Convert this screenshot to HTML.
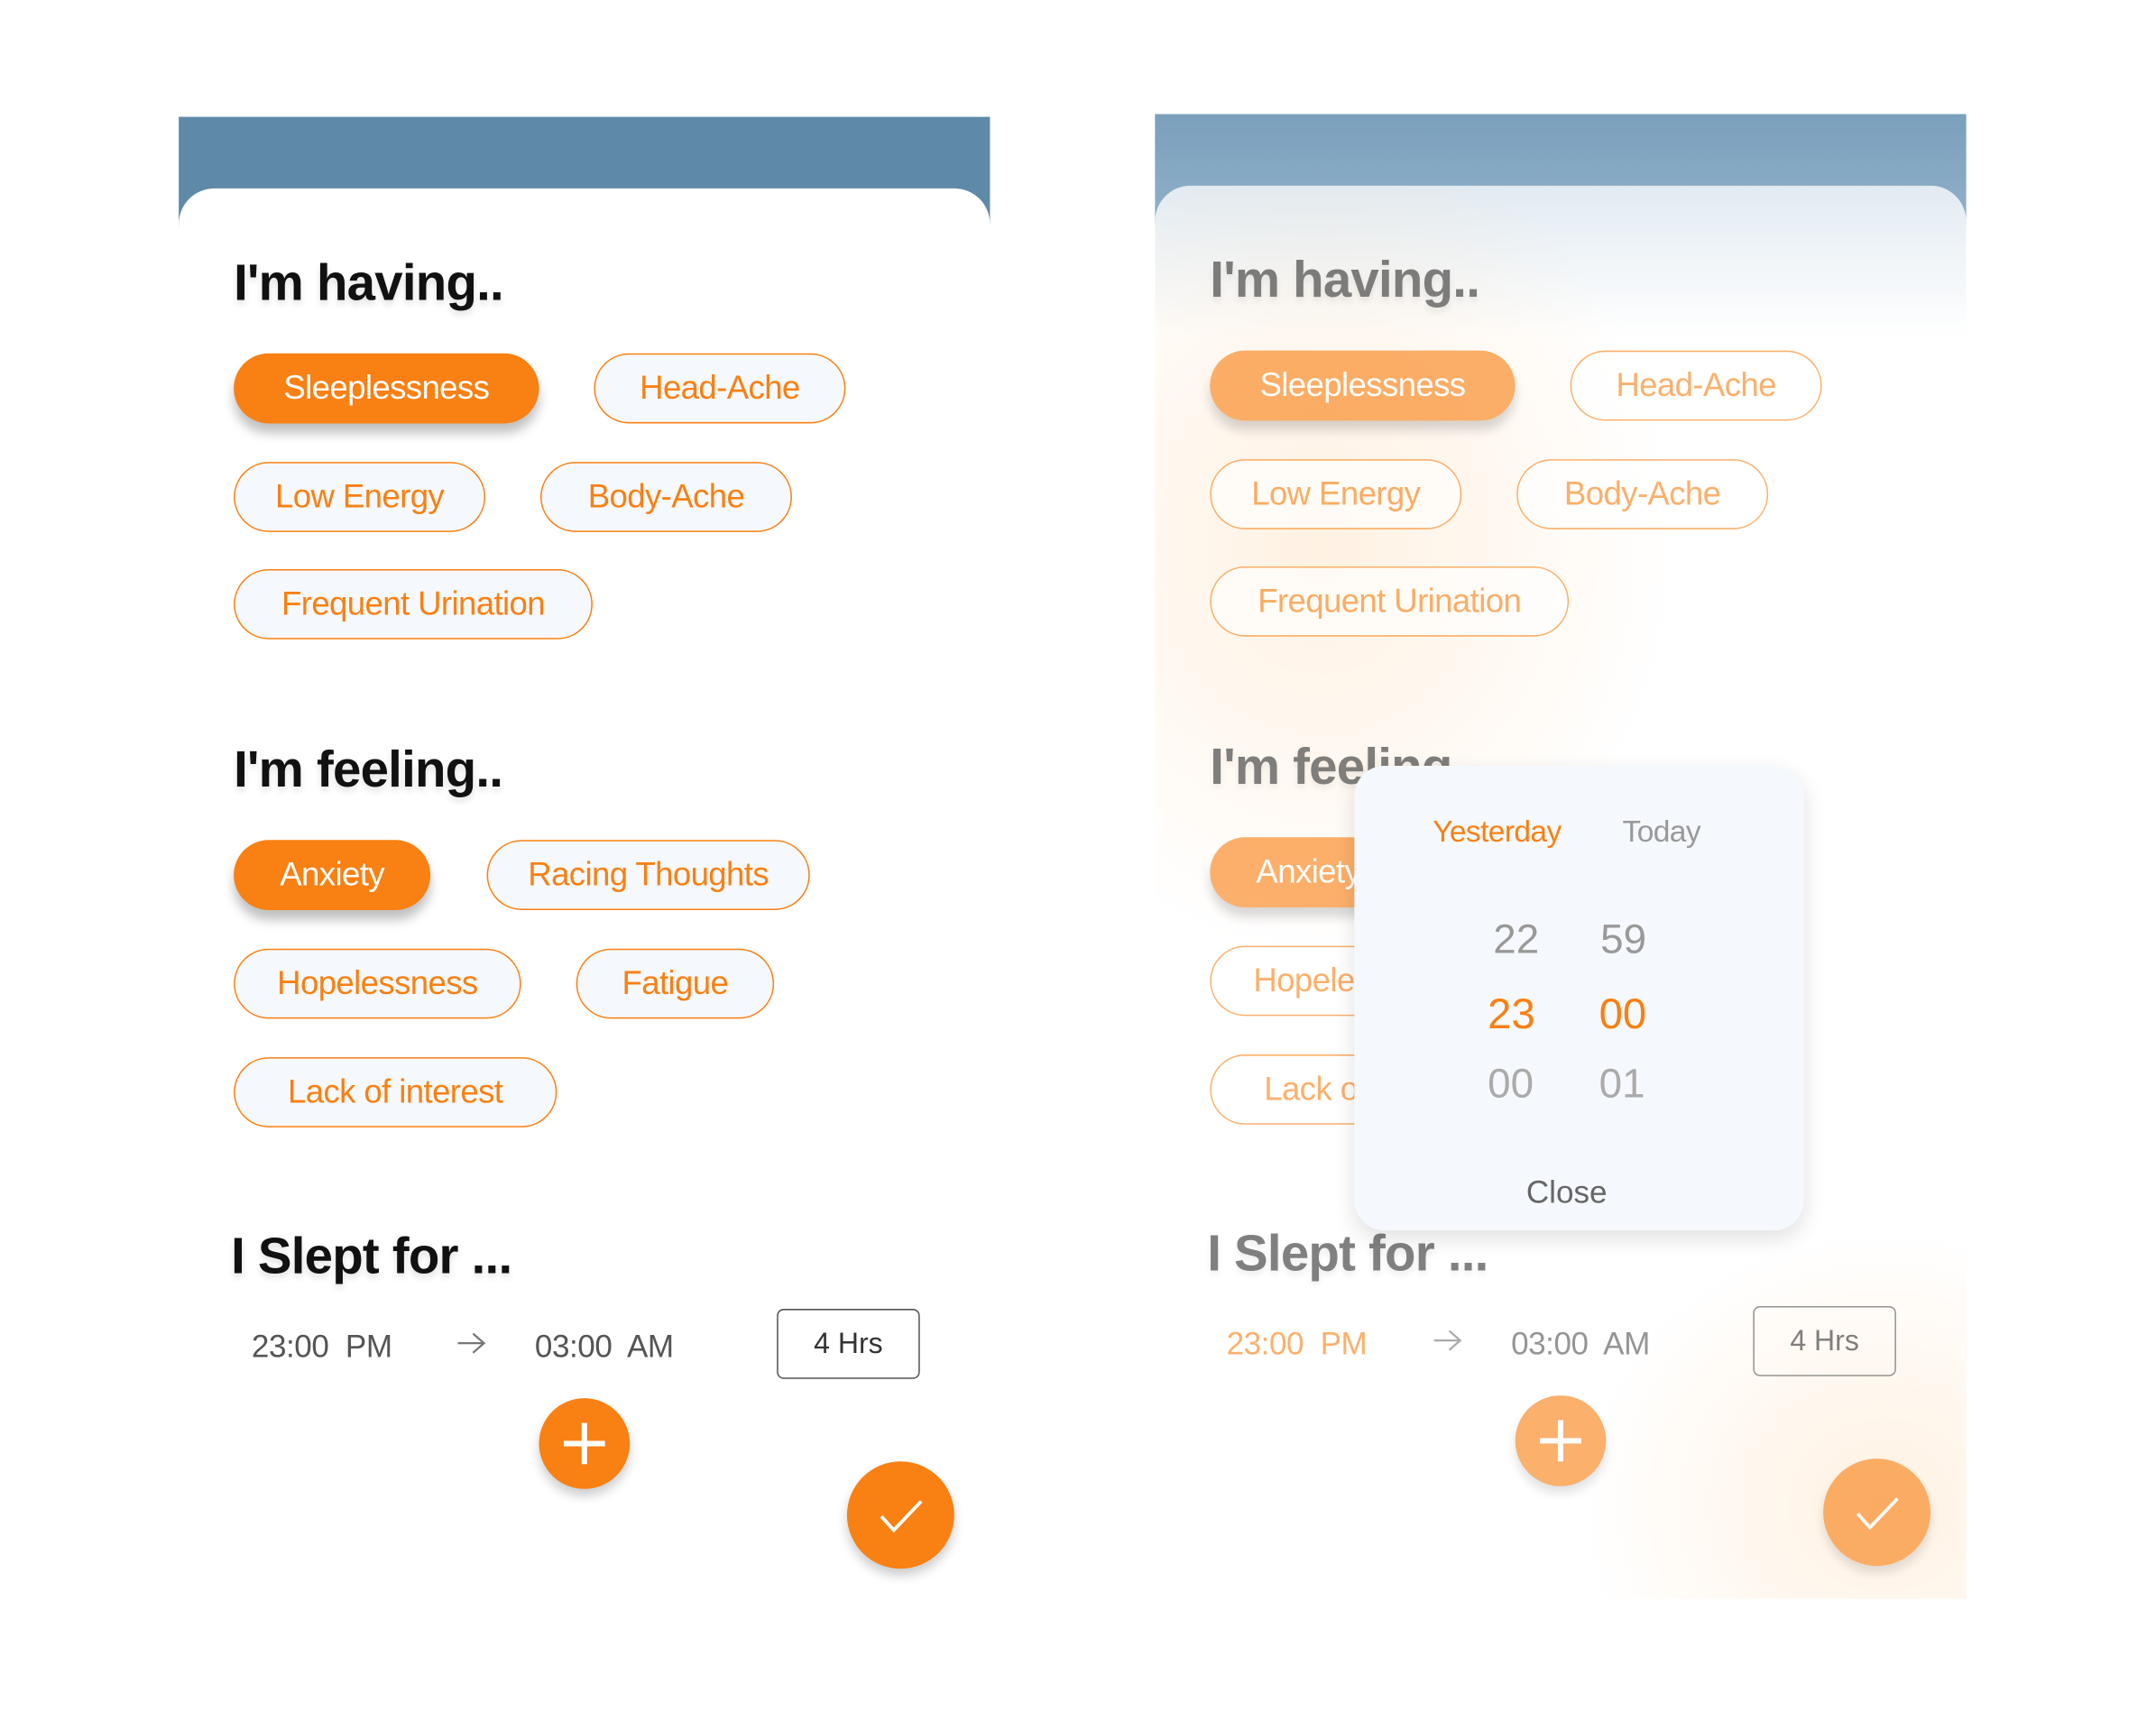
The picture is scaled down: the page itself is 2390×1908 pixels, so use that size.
<!DOCTYPE html>
<html><head><meta charset="utf-8"><style>
*{margin:0;padding:0;box-sizing:border-box}
html,body{width:2390px;height:1908px;background:#fff;overflow:hidden;font-family:"Liberation Sans",sans-serif}
#s{position:absolute;left:0;top:0;width:1568px;height:1252px;transform:scale(1.5242);transform-origin:0 0}
.a{position:absolute}
.hd{background:#5e8aa8}
.card{background:#fff;border-radius:26px 26px 0 0}
h2{position:absolute;font-size:37px;font-weight:700;color:#111;text-shadow:0 3px 5px rgba(0,0,0,.12);white-space:nowrap;letter-spacing:-.5px}
.p{position:absolute;height:51px;border:1.5px solid #f98012;border-radius:26px;background:#f5f8fc;color:#f98012;font-size:24px;display:flex;align-items:center;justify-content:center;white-space:nowrap;letter-spacing:-.4px}
.p.f{background:#f98012;color:#fff;border:none;box-shadow:0 7px 8px rgba(0,0,0,.25)}
.t{position:absolute;font-size:23px;color:#555;white-space:nowrap;letter-spacing:-.3px}
.ar{position:absolute;width:22px;height:20px}
.box{position:absolute;width:104px;height:51px;border:1.5px solid #555;border-radius:5px;font-size:21px;color:#333;display:flex;align-items:center;justify-content:center}
.c{position:absolute;border-radius:50%;background:#f98012;box-shadow:0 5px 8px rgba(0,0,0,.2)}
.fade{opacity:.62}
.pop{position:absolute;left:985px;top:557px;width:327px;height:338px;background:#f5f8fc;border-radius:22px;box-shadow:0 6px 16px rgba(0,0,0,.12)}
.pop div{position:absolute;white-space:nowrap}
</style></head><body><div id="s">

<!-- LEFT -->
<div class="a hd" style="left:130px;top:85px;width:590px;height:80px"></div>
<div class="a card" style="left:130px;top:137px;width:590px;height:1115px"></div>
<h2 style="left:170px;top:185px">I'm having..</h2>
<div class="p f" style="left:170px;top:257px;width:222px">Sleeplessness</div>
<div class="p" style="left:432px;top:257px;width:183px">Head-Ache</div>
<div class="p" style="left:170px;top:336px;width:183px">Low Energy</div>
<div class="p" style="left:393px;top:336px;width:183px">Body-Ache</div>
<div class="p" style="left:170px;top:414px;width:261px">Frequent Urination</div>
<h2 style="left:170px;top:539px">I'm feeling..</h2>
<div class="p f" style="left:170px;top:611px;width:143px">Anxiety</div>
<div class="p" style="left:354px;top:611px;width:235px">Racing Thoughts</div>
<div class="p" style="left:170px;top:690px;width:209px">Hopelessness</div>
<div class="p" style="left:419px;top:690px;width:144px">Fatigue</div>
<div class="p" style="left:170px;top:769px;width:235px">Lack of interest</div>
<h2 style="left:168px;top:893px">I Slept for ...</h2>
<div class="t" style="left:183px;top:966px">23:00&nbsp; PM</div>
<svg class="ar" style="left:332px;top:967px" viewBox="0 0 22 20"><path d="M1 10H20M12 3L20 10L12 17" stroke="#777" stroke-width="1.5" fill="none"/></svg>
<div class="t" style="left:389px;top:966px">03:00&nbsp; AM</div>
<div class="box" style="left:565px;top:952px">4 Hrs</div>
<div class="c" style="left:392px;top:1017px;width:66px;height:66px"><svg width="66" height="66"><path d="M33 18V48M18 33H48" stroke="#fff" stroke-width="4"/></svg></div>
<div class="c" style="left:616px;top:1063px;width:78px;height:78px"><svg width="78" height="78"><path d="M25 40L34 50L54 29" stroke="#fff" stroke-width="2.5" fill="none"/></svg></div>

<!-- RIGHT -->
<div class="a" style="left:840px;top:83px;width:590px;height:80px;background:linear-gradient(#7aa0bc,#90b0c8)"></div>
<div class="a card" style="left:840px;top:135px;width:590px;height:1028px;background:radial-gradient(ellipse 260px 300px at 120px 260px,rgba(255,200,140,.25),transparent),radial-gradient(ellipse 220px 200px at 530px 960px,rgba(255,210,160,.3),transparent),linear-gradient(#e2ebf2,#fff 110px)"></div>
<div class="fade">
<h2 style="left:880px;top:183px;color:#333">I'm having..</h2>
<div class="p f" style="left:880px;top:255px;width:222px">Sleeplessness</div>
<div class="p" style="left:1142px;top:255px;width:183px;background:#fff">Head-Ache</div>
<div class="p" style="left:880px;top:334px;width:183px;background:#fff">Low Energy</div>
<div class="p" style="left:1103px;top:334px;width:183px;background:#fff">Body-Ache</div>
<div class="p" style="left:880px;top:412px;width:261px;background:#fff">Frequent Urination</div>
<h2 style="left:880px;top:537px;color:#333">I'm feeling..</h2>
<div class="p f" style="left:880px;top:609px;width:143px">Anxiety</div>
<div class="p" style="left:880px;top:688px;width:209px;background:#fff">Hopelessness</div>
<div class="p" style="left:880px;top:767px;width:235px;background:#fff">Lack of interest</div>
<h2 style="left:878px;top:891px;color:#333">I Slept for ...</h2>
<div class="t" style="left:892px;top:964px;color:#f98012">23:00&nbsp; PM</div>
<svg class="ar" style="left:1042px;top:965px" viewBox="0 0 22 20"><path d="M1 10H20M12 3L20 10L12 17" stroke="#777" stroke-width="1.5" fill="none"/></svg>
<div class="t" style="left:1099px;top:964px">03:00&nbsp; AM</div>
<div class="box" style="left:1275px;top:950px">4 Hrs</div>
<div class="c" style="left:1102px;top:1015px;width:66px;height:66px"><svg width="66" height="66"><path d="M33 18V48M18 33H48" stroke="#fff" stroke-width="4"/></svg></div>
<div class="c" style="left:1326px;top:1061px;width:78px;height:78px"><svg width="78" height="78"><path d="M25 40L34 50L54 29" stroke="#fff" stroke-width="2.5" fill="none"/></svg></div>
</div>
<div class="pop">
<div style="left:57px;top:35px;font-size:22px;color:#f98012;letter-spacing:-.4px">Yesterday</div>
<div style="left:195px;top:35px;font-size:22px;color:#999;letter-spacing:-.4px">Today</div>
<div style="left:101px;top:110px;font-size:30px;color:#999">22</div>
<div style="left:179px;top:110px;font-size:30px;color:#999">59</div>
<div style="left:97px;top:163px;font-size:31px;color:#f98012">23</div>
<div style="left:178px;top:163px;font-size:31px;color:#f98012">00</div>
<div style="left:97px;top:215px;font-size:30px;color:#aaa">00</div>
<div style="left:178px;top:215px;font-size:30px;color:#aaa">01</div>
<div style="left:125px;top:297px;font-size:23px;color:#666">Close</div>
</div>
</div></body></html>
